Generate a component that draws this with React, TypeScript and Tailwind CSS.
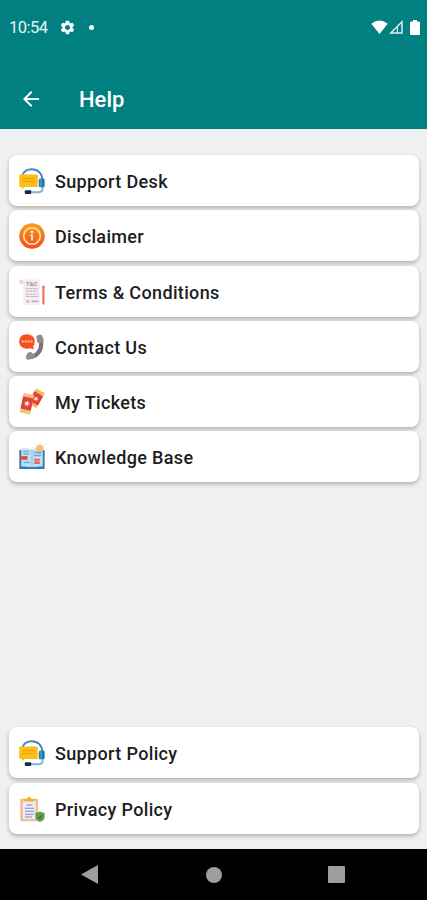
import type { ReactNode } from "react";
import { MdArrowBack, MdSettings } from "react-icons/md";

interface MenuItem {
  label: string;
  icon: ReactNode;
}

const TOP_ITEMS: MenuItem[] = [
  { label: "Support Desk", icon: <HeadsetIcon /> },
  { label: "Disclaimer", icon: <InfoIcon /> },
  { label: "Terms & Conditions", icon: <TermsIcon /> },
  { label: "Contact Us", icon: <PhoneIcon /> },
  { label: "My Tickets", icon: <TicketsIcon /> },
  { label: "Knowledge Base", icon: <BookIcon /> },
];

const BOTTOM_ITEMS: MenuItem[] = [
  { label: "Support Policy", icon: <HeadsetIcon /> },
  { label: "Privacy Policy", icon: <PrivacyIcon /> },
];

// ---------------------------------------------------------------------
// Icons
// ---------------------------------------------------------------------
function HeadsetIcon() {
  return (
    <svg viewBox="0 0 26 26" className="size-[26px]" fill="none" aria-hidden="true">
      <path d="M3.500 7C5.500 2.500 9 1.200 12.800 1.200c6.200 0 10.400 4.300 10.400 10.300" stroke="#3f86bd" strokeWidth="1.900" />
      <path d="M4.500 6.500C6.500 3.500 9.500 2.500 12.500 2.600" stroke="#a9d3ea" strokeWidth="0.800" />
      <path d="M23.600 17v3.500c0 2.500-1.500 3.700-4 3.700H11" stroke="#7fb4d8" strokeWidth="1.900" />
      <path d="M1.200 6.500h16.600q1 0 1 1v10.500q0 1-1 1H5.500L3 21.200v-2.200H1.200q-1 0-1-1V7.500q0-1 1-1z" fill="#fac015" />
      <path d="M3 10.700h12.500M3 13.500h12.500" stroke="#dca014" strokeWidth="0.900" />
      <rect x="19.800" y="10.500" width="5.900" height="8.700" rx="1.500" fill="#2779a8" />
      <path d="M22 11v7.500" stroke="#3fa5bd" strokeWidth="1.400" />
      <rect x="5.800" y="22.300" width="6.400" height="3.600" rx="1" fill="#14284f" />
    </svg>
  );
}

function InfoIcon() {
  return (
    <svg viewBox="0 0 26 26" className="size-[26px]" fill="none" aria-hidden="true">
      <defs>
        <linearGradient id="info-fill" x1="0" y1="0" x2="0" y2="1">
          <stop offset="0" stopColor="#fb9d1c" />
          <stop offset="1" stopColor="#ef4f14" />
        </linearGradient>
      </defs>
      <circle cx="13" cy="13" r="12.800" fill="url(#info-fill)" />
      <circle cx="13" cy="13" r="8.300" stroke="#ffe3c4" strokeWidth="1.600" />
      <circle cx="13" cy="9" r="1.400" fill="#ffe3c4" />
      <path d="M11.500 12.200H13V17.500" stroke="#ffe3c4" strokeWidth="1.900" />
    </svg>
  );
}

function TermsIcon() {
  return (
    <svg viewBox="0 0 26 26" className="size-[26px]" aria-hidden="true">
      <path d="M0.500 1.500q0-1 1.500-1h17.500q1.500 0 1.500 1.500v23q0 .8-1 .8H6q-1.800 0-1.800-1.800V5H1.500Q.5 5 .5 4z" fill="#f4eef1" />
      <path d="M.4 2q0-1.500 1.700-1.500T4.300 2v3H1.400Q.4 5 .4 4z" fill="#f3dbc0" />
      <text x="12.700" y="7" fontSize="6.200" fontWeight="700" fontFamily="Roboto, sans-serif" textAnchor="middle" fill="#a1979f">
        T&amp;C
      </text>
      <path d="M7 9.700h12M7 12.200h12M7 15.200h12M7 17.500h12" stroke="#bfb4c8" strokeWidth="1" strokeDasharray="3 .5" />
      <path d="M12.500 22.300h7" stroke="#9a8da5" strokeWidth="1" />
      <rect x="7.500" y="21" width="2.600" height="2.600" fill="#d7b5b4" />
      <path d="M23.200 7.500h2.400v15.800L24.400 26l-1.200-2.700z" fill="#ef8464" />
      <path d="M23.200 6.700h2.400v1.900h-2.400z" fill="#b3848b" />
      <path d="M23.600 24h1.600L24.400 26z" fill="#54495c" />
    </svg>
  );
}

function PhoneIcon() {
  return (
    <svg viewBox="0 0 26 26" className="size-[26px]" fill="none" aria-hidden="true">
      <path d="M7.800.2c4.800 0 7.900 3 7.900 7.300 0 2.300-.7 3.700-1.500 4.700l.7 3.300-3.300-1.300C4.500 16 .2 12.200.2 7.500.2 3 3.300.2 7.800.2z" fill="#f4511e" />
      <path d="M2.800 7.500h11" stroke="#ffb99d" strokeWidth="2.200" strokeDasharray="2 .9" />
      <path d="M21.300 4.500C24.200 14 19.500 22.300 10.500 23" stroke="#7b737c" strokeWidth="4.300" />
      <path d="M17.300 2.200Q20 .1 22.700 1l2.100 5q.3 1.600-1.300 2.300l-3.800.8q-1.200-.2-1.500-1.400z" fill="#918a92" />
      <path d="M8 19.700q2-2 4.300-1.500l3.900 3.600-2.300 2.900-5 1.100q-2.400-.6-1.900-3z" fill="#918a92" />
    </svg>
  );
}

function TicketsIcon() {
  return (
    <svg viewBox="0 0 26 26" className="size-[26px]" aria-hidden="true">
      <g transform="rotate(29 18 10)">
        <path d="M12 1h2.200q.7 1.400 1.700 0h1.900q.7 1.400 1.700 0h2.500v17.500H12z" fill="#f3b766" />
        <path d="M12 4.600h10v10.700H12z" fill="#df433c" />
        <path d="M17 7.800l.8 1.500 1.700.2-1.200 1.200.3 1.700-1.600-.8-1.500.8.300-1.700-1.300-1.200 1.700-.2z" fill="#ffe0c8" />
      </g>
      <g transform="rotate(12 8 14)">
        <path d="M2.800 4.500h2.500q.7 1.400 1.700 0h1.600q.7 1.400 1.700 0h3v20.200h-2.500q-.8-1.400-1.700 0H7.500q-.8-1.400-1.700 0h-3z" fill="#f5c170" />
        <path d="M2.800 8.300h10.500v12.500H2.800z" fill="#df413c" />
        <path d="M8 11.500l1 1.900 2 .2-1.500 1.300.4 2.100L8 16l-1.900 1 .4-2.100L5 13.600l2-.2z" fill="#fff1de" />
      </g>
    </svg>
  );
}

function BookIcon() {
  return (
    <svg viewBox="0 0 26 26" className="size-[26px]" aria-hidden="true">
      <path d="M.3 6h25.300v19H.3z" fill="#3a76b4" />
      <path d="M2.300 4.500q5.700-.8 10.500 1V23.200q-4.800-1-10.500-.6zM23.700 4.500Q18 3.700 13.200 5.500V23.200q4.800-1 10.500-.6z" fill="#bde2f5" />
      <path d="M4.300 7.500h6M4.300 10h6M4.300 18.500h7" stroke="#6fb4d8" strokeWidth="1.300" />
      <path d="M15 8.500h4M15 11.500h7" stroke="#6fa4c4" strokeWidth="1.300" />
      <path d="M1 12.200h7.500v3.500H1z" fill="#e2453f" />
      <path d="M15.300 14.700h5.500V20h-5.500z" fill="#ef6259" />
      <path d="M15.300 17.200h5.500" stroke="#c7e8f8" strokeWidth=".6" />
      <circle cx="20.700" cy="4.300" r="3.700" fill="#f9bd80" />
      <path d="M19.200 7.700h3v2h-3z" fill="#8d94a3" />
      <path d="M16.500 1.200l-1-1M15.500 4H14M25 .8l.8-.8" stroke="#f9cfa3" strokeWidth=".8" />
    </svg>
  );
}

function PrivacyIcon() {
  return (
    <svg viewBox="0 0 26 26" className="size-[26px]" fill="none" aria-hidden="true">
      <rect x="1.300" y="2.700" width="17.700" height="22.600" rx="1.300" fill="#f6bb8b" />
      <path d="M3.800 5h12.900v18.200H3.800z" fill="#ecebfa" />
      <path d="M5.300 5.500V3h2.800Q10.200-1.500 12.400 3h2.800v2.500z" fill="#fbab1c" />
      <path d="M7.500 9h6M6 12.200h9M6 15.200h9M6 18.200h9M6 21h7" stroke="#8088b8" strokeWidth="1.100" />
      <path d="M21 15.500q2 1.300 4.600 1.300v4.200q0 3.300-4.600 5-4.600-1.700-4.600-5v-4.200q2.600 0 4.600-1.300z" fill="#5f9f48" />
      <path d="M19 20.800l1.500 1.500 2.700-2.900" stroke="#2d6a32" strokeWidth="1.200" />
    </svg>
  );
}

// ---------------------------------------------------------------------
// Layout pieces
// ---------------------------------------------------------------------
function StatusBar() {
  return (
    <div className="flex h-[54px] items-center pr-[7px] pl-[9px] text-white">
      <span className="pt-[3px] text-[16.500px] leading-none tracking-[-0.5px] text-white/90">10:54</span>
      <MdSettings size={17} className="ml-[11px]" aria-hidden="true" />
      <span className="ml-[13px] size-[5px] rounded-full bg-white" />
      <div className="ml-auto flex items-center">
        <svg viewBox="0 0 17 14" className="h-[14px] w-[17px]" aria-hidden="true">
          <path d="M.3 3.800Q8.500-2.800 16.700 3.800L8.500 14z" fill="#fff" />
        </svg>
        <svg viewBox="0 0 14 14" className="ml-px h-[14px] w-[14px]" fill="none" aria-hidden="true">
          <path d="M13 1.800V13H1.800z" stroke="#d8eeee" strokeWidth="1.500" />
          <path d="M8.500 6v7" stroke="#d8eeee" strokeWidth="1.200" />
          <path d="M9.300 6h2.200v5.500H9.300z" fill="#008080" />
        </svg>
        <svg viewBox="0 0 10 15" className="ml-[7px] h-[15px] w-[10px]" aria-hidden="true">
          <path d="M3 0h4v1.500h2q1 0 1 1V14q0 1-1 1H1q-1 0-1-1V2.500q0-1 1-1h2z" fill="#fff" />
        </svg>
      </div>
    </div>
  );
}

function MenuList({ items }: { items: MenuItem[] }) {
  return (
    <ul className="flex flex-col gap-[4.300px]">
      {items.map((item) => (
        <li key={item.label}>
          <button
            type="button"
            className="flex h-[51px] w-full items-center rounded-lg bg-white pt-px pl-[10px] text-left shadow-[0_2px_4px_rgba(0,0,0,0.28)]"
          >
            {item.icon}
            <span className="ml-[10px] pt-px text-[18px] font-medium tracking-[0.35px] text-[#1c1c22]">
              {item.label}
            </span>
          </button>
        </li>
      ))}
    </ul>
  );
}

function SystemNav() {
  return (
    <div className="flex h-[51px] items-center bg-black pl-[81px]">
      <svg viewBox="0 0 17 19" className="h-[19px] w-[17px]" aria-hidden="true">
        <path d="M17 0v19L0 9.500z" fill="#9e9e9e" />
      </svg>
      <span className="ml-[108px] size-[16px] rounded-full bg-[#9e9e9e]" />
      <span className="ml-[106px] size-[17px] rounded-[1px] bg-[#9e9e9e]" />
    </div>
  );
}

export default function App() {
  return (
    <div className="flex h-[900px] w-[427px] flex-col overflow-hidden bg-[#f0f0f0] font-['Roboto',sans-serif]">
      <header className="h-[128.500px] shrink-0 bg-[#008080] text-white">
        <StatusBar />
        <div className="flex h-[74px] items-center pt-[16px] pl-[20px]">
          <MdArrowBack size={24} className="-mt-px -ml-px" aria-hidden="true" />
          <h1 className="ml-[36px] pt-[2px] text-[22px] leading-none font-medium">Help</h1>
        </div>
      </header>

      <main className="flex flex-1 flex-col justify-between pt-[26.500px] pr-[8px] pb-[15.500px] pl-[9px]">
        <MenuList items={TOP_ITEMS} />
        <MenuList items={BOTTOM_ITEMS} />
      </main>

      <SystemNav />
    </div>
  );
}
